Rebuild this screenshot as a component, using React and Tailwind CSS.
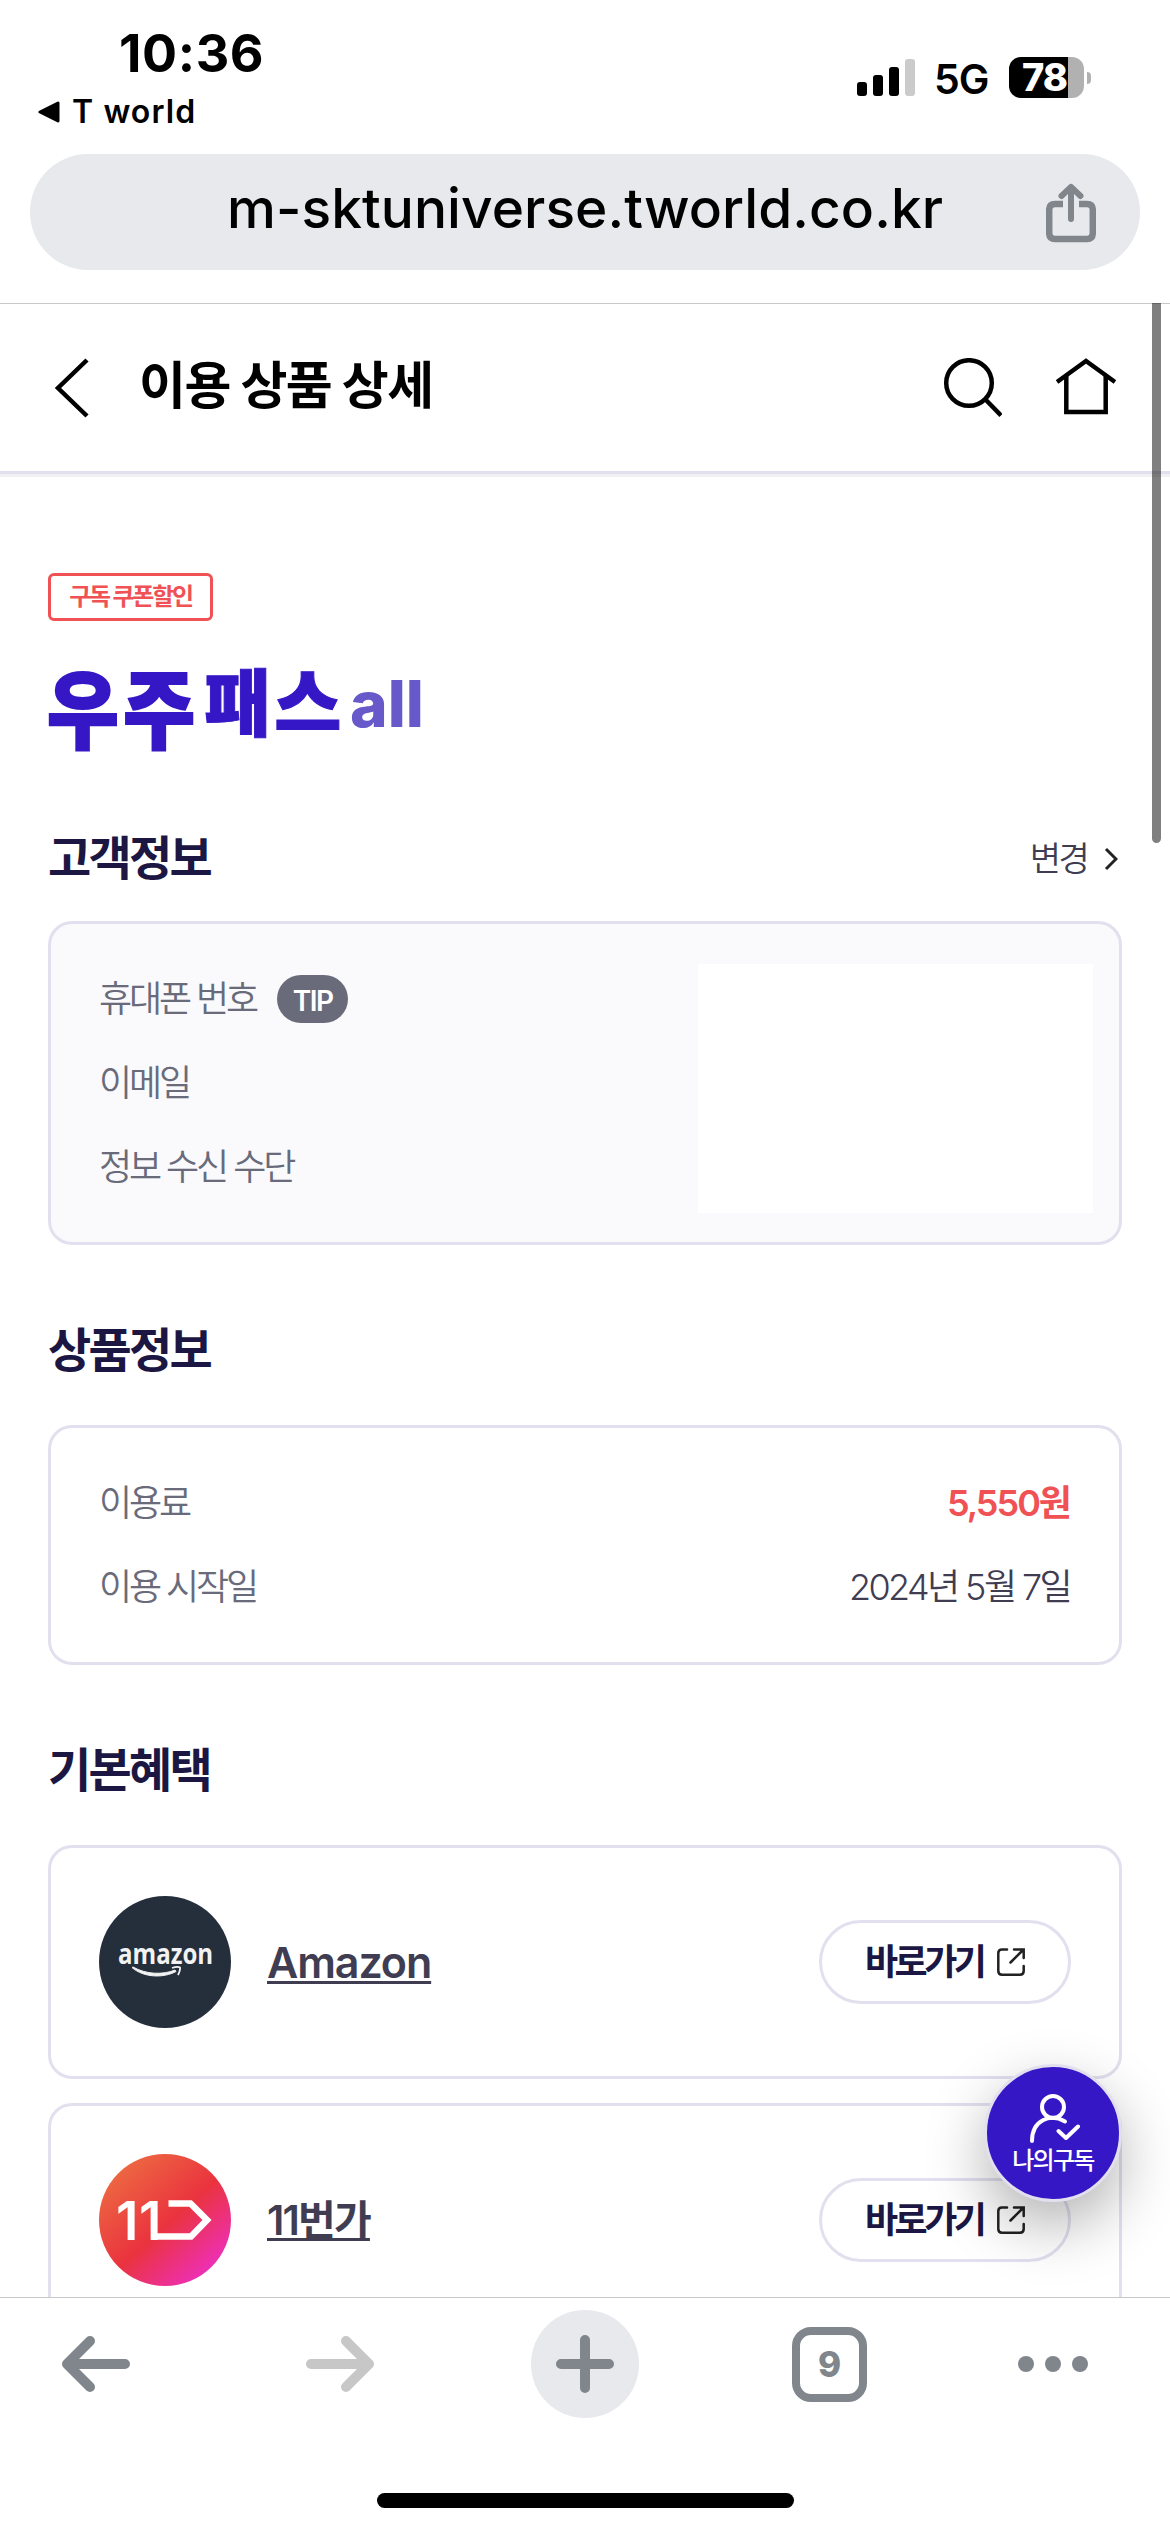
import { clsx } from "clsx";

const benefits = [
    { id: "amazon", name: "Amazon", Logo: AmazonLogo, nameClass: "text-[43px] font-semibold tracking-[-1.100px]" },
    { id: "11st", name: "11번가", Logo: ElevenLogo, nameClass: "text-[41px] font-semibold tracking-[-1.800px]" },
];

function AmazonLogo() {
    return (
        <svg width="132" height="132" viewBox="0 0 132 132" overflow="visible">
            <circle cx="66" cy="66" r="66" fill="#252f3c" />
            <text
                transform="translate(19 68) scale(0.830 1)"
                fill="#f2f2f2"
                fontSize="29"
                fontWeight="700"
                fontFamily="'Open Sans', sans-serif"
            >
                amazon
            </text>
            <path d="M33 71.500 C45 82 65 82 77 75.500 L76 74 C64 79 47 78.500 34 71 Z" fill="#f2f2f2" stroke="#f2f2f2" />
            <path d="M73 72 C77 70.500 80 70.800 81 71.500 C81.500 74 80 77 79 79" fill="none" stroke="#f2f2f2" strokeWidth="1.800" />
        </svg>
    );
}

function ElevenLogo() {
    return (
        <svg width="132" height="132" viewBox="0 0 132 132" overflow="visible">
            <defs>
                <linearGradient id="eleven" x1="0.1" y1="0.12" x2="0.85" y2="0.95">
                    <stop offset="0" stopColor="#ed6a42" />
                    <stop offset="0.52" stopColor="#ea333e" />
                    <stop offset="1" stopColor="#ee2fc4" />
                </linearGradient>
            </defs>
            <circle cx="66" cy="66" r="66" fill="url(#eleven)" />
            <g fill="#fff" fontSize="53" fontWeight="600" fontFamily="Inter, sans-serif">
                <text x="17" y="85.5">1</text>
                <text x="40" y="85.5">1</text>
            </g>
            <path d="M69.5 49.5 H91.500 L108 66 L92 82.500 H54" fill="none" stroke="#fff" strokeWidth="6.500" />
        </svg>
    );
}

function StatusBar() {
    return (
        <div className="flex h-[154px] justify-between pr-[79px] pl-[38px]">
            <div className="flex flex-col">
                <span className="mt-[24px] ml-[81px] text-[52px] leading-[60px] font-bold tracking-[0.600px]">10:36</span>
                <div className="mt-[8px] flex items-center gap-[12px]">
                    <svg width="22" height="22" viewBox="0 0 22 22">
                        <path d="M2 11 L20 2 V20 Z" stroke="#000" strokeWidth="3" strokeLinejoin="round" />
                    </svg>
                    <span className="text-[32px] leading-[40px] font-semibold tracking-[1.100px]">T world</span>
                </div>
            </div>
            <div className="mt-[57px] flex h-[41px] items-center">
                <svg width="58" height="38" viewBox="0 0 58 38">
                    <rect x="0" y="23" width="10" height="14" rx="3" />
                    <rect x="16" y="16" width="10" height="21" rx="3" />
                    <rect x="32" y="8" width="10" height="29" rx="3" />
                    <rect x="48" y="0" width="10" height="37" rx="3" fill="#cbcbcb" />
                </svg>
                <span className="mt-[3px] ml-[19px] w-[75px] text-[41px] leading-[41px] font-semibold tracking-[-1px]">5G</span>
                <div className="flex h-[41px] w-[75px] items-center justify-center rounded-[12px] bg-linear-to-r from-black from-79% to-[#b1b1b1] to-79% text-[38px] leading-[41px] font-extrabold tracking-[-1px] text-white">
                    <span className="-ml-[4px]">78</span>
                </div>
                <div className="ml-[3px] h-[12px] w-[4px] rounded-r-full bg-[#b1b1b1]" />
            </div>
        </div>
    );
}

function AddressBar() {
    return (
        <div className="mx-[30px] flex h-[116px] items-center rounded-full bg-[#e8e9ed] pr-[44px] pl-[197px]">
            <span className="-mt-[8px] flex-1 text-[55px] leading-[60px] font-medium tracking-[0.080px]">
                m-sktuniverse.tworld.co.kr
            </span>
            <svg className="mt-[2px]" width="50" height="60" viewBox="0 0 50 60" fill="none" stroke="#80868b" strokeWidth="6.500">
                <path d="M17 21 H9 Q3.200 21 3.200 27 V50 Q3.200 56 9 56 H41 Q46.800 56 46.800 50 V27 Q46.800 21 41 21 H33" />
                <path d="M25 36 V5 M15.500 13 L25 3.800 L34.500 13" strokeWidth="6" strokeLinecap="round" strokeLinejoin="round" />
            </svg>
        </div>
    );
}

function PageHeader() {
    return (
        <header className="flex h-[171px] shrink-0 items-center border-t border-b-[3px] border-t-[#c8c8ca] border-b-[#e2e0ef] px-[54px] shadow-[0_3px_0_#f1f0f5]">
            <svg width="36" height="60" viewBox="0 0 36 60" fill="none" stroke="#000" strokeWidth="4.500">
                <path d="M33 2 L4 30 L33 58" />
            </svg>
            <h1 className="-mt-[4px] ml-[49px] flex-1 text-[51px] leading-[60px] font-bold tracking-[-1.500px]">이용 상품 상세</h1>
            <svg width="60" height="60" viewBox="0 0 60 60" fill="none" stroke="#000" strokeWidth="4.500">
                <circle cx="27" cy="25" r="22.800" />
                <path d="M43 41 L59 57.500" />
            </svg>
            <svg className="ml-[54px]" width="60" height="60" viewBox="0 0 60 60" fill="none" stroke="#000" strokeWidth="4.500">
                <path d="M1 24 L30 3 L59 24" />
                <path d="M10.300 18 V54 H49.700 V18" />
            </svg>
        </header>
    );
}

function SectionTitle({ children }) {
    return <h2 className="text-[47px] leading-[60px] font-bold tracking-[-2.700px] text-[#1b1742]">{children}</h2>;
}

function InfoRow({ label, value, valueClass, tip }) {
    return (
        <div className="flex h-[48px] items-center">
            <span className="text-[36px] leading-[48px] font-[350] tracking-[-3.100px] text-[#696b7b]">{label}</span>
            {tip && (
                <span className="ml-[21px] flex h-[48px] w-[71px] items-center justify-center rounded-full bg-[#696b7b] pt-[4px] text-[28px] font-semibold tracking-[-1.500px] text-white">
                    {tip}
                </span>
            )}
            {value && <span className={clsx("mr-[1px] ml-auto text-[36px] leading-[48px]", valueClass)}>{value}</span>}
        </div>
    );
}

function BenefitCard({ name, Logo, nameClass }) {
    return (
        <div className="flex h-[234px] items-center rounded-[24px] border-[3px] border-[#e2e0ef] px-[48px]">
            <Logo />
            <a
                className={clsx(
                    "ml-[36px] leading-[60px] text-[#403d52] underline decoration-[3px] underline-offset-[3px] [text-decoration-skip-ink:none]",
                    nameClass
                )}
            >
                {name}
            </a>
            <button className="ml-auto flex h-[84px] w-[252px] items-center rounded-full border-[3px] border-[#e2e0ef] pl-[43px]">
                <span className="w-[132px] text-left text-[36px] leading-[48px] font-bold tracking-[-3.500px] text-[#1b1742]">
                    바로가기
                </span>
                <svg width="28" height="28" viewBox="0 0 28 28" fill="none" stroke="#222" strokeWidth="2.500" strokeLinecap="round">
                    <path d="M10 1.500 H5 Q1.300 1.500 1.300 5 V23 Q1.300 26.700 5 26.700 H23 Q26.700 26.700 26.700 23 V18" />
                    <path d="M17 1.500 H26.700 V10 M26 2 L13.500 14.500" />
                </svg>
            </button>
        </div>
    );
}

function FloatingButton() {
    return (
        <button className="absolute top-[1761px] right-[48px] flex h-[138px] w-[138px] flex-col items-center rounded-full border-[3px] border-[#e2e0ef] bg-[#3617c6] shadow-[0_24px_60px_rgba(0,0,0,0.3)]">
            <svg className="mt-[25px]" width="54" height="54" viewBox="0 0 54 54" fill="none" stroke="#fff" strokeWidth="4" strokeLinecap="round">
                <circle cx="27" cy="15" r="11" />
                <path d="M6 49 C6 28 24 21 39 29.500" />
                <path d="M32.500 39 L40 46 L52 34.500" strokeLinejoin="round" />
            </svg>
            <span className="mt-[2px] text-[24px] leading-[26px] font-medium tracking-[-1.700px] whitespace-nowrap text-white">나의구독</span>
        </button>
    );
}

function Toolbar() {
    return (
        <nav className="relative flex h-[235px] flex-col items-center border-t border-[#c8c8ca] bg-white">
            <div className="flex h-[132px] w-full items-center pr-[82px] pl-[60px]">
                <svg width="70" height="60" viewBox="0 0 70 60" fill="none" stroke="#80868b" strokeWidth="10" strokeLinecap="round" strokeLinejoin="round">
                    <path d="M65 30 H8 M30 7 L7 30 L30 53" />
                </svg>
                <svg className="ml-[176px]" width="70" height="60" viewBox="0 0 70 60" fill="none" stroke="#c7c7c7" strokeWidth="10" strokeLinecap="round" strokeLinejoin="round">
                    <path d="M5 30 H62 M40 7 L63 30 L40 53" />
                </svg>
                <div className="ml-[155px] flex h-[108px] w-[108px] items-center justify-center rounded-full bg-[#e8e9ed]">
                    <svg width="60" height="60" viewBox="0 0 60 60" stroke="#80868b" strokeWidth="10" strokeLinecap="round">
                        <path d="M6 30 H54 M30 6 V54" />
                    </svg>
                </div>
                <div className="ml-[153px] flex h-[75px] w-[75px] items-center justify-center rounded-[19px] border-[8px] border-[#80868b] text-[35px] leading-[40px] font-extrabold text-[#80868b]">
                    9
                </div>
                <div className="ml-auto flex gap-[11px]">
                    <i className="h-4 w-4 rounded-full bg-[#80868b]" />
                    <i className="h-4 w-4 rounded-full bg-[#80868b]" />
                    <i className="h-4 w-4 rounded-full bg-[#80868b]" />
                </div>
            </div>
            <div className="mt-[63px] h-[15px] w-[417px] rounded-full bg-black" />
        </nav>
    );
}

export default function App() {
    return (
        <div className="flex h-[2532px] w-[1170px] flex-col overflow-hidden bg-white font-['Inter','Noto_Sans_CJK_KR',sans-serif] text-black">
            <StatusBar />
            <AddressBar />

            <div className="relative mt-[33px] flex h-[1994px] shrink-0 flex-col overflow-hidden">
                <PageHeader />

                <main className="flex flex-col px-[48px]">
                    <span className="mt-[99px] flex h-[48px] w-[165px] items-center justify-center rounded-[6px] border-[3px] border-[#ef5155] text-[24px] font-semibold tracking-[-2.300px] whitespace-nowrap text-[#ef5155]">
                        구독 쿠폰할인
                    </span>

                    {/* product logo */}
                    <div className="mt-[41px] flex h-[96px] items-center font-black text-[#3617c6]">
                        <span className="mt-[2px] -ml-px w-[157px] scale-y-110 text-[78px] leading-[96px] tracking-[4.500px] whitespace-nowrap [-webkit-text-stroke:2px_#3617c6]">
                            우주
                        </span>
                        <span className="-mt-[12px] w-[146px] text-[73px] leading-[76px] tracking-[3px] whitespace-nowrap [-webkit-text-stroke:1px_#3617c6]">
                            패스
                        </span>
                        <span className="-mt-[12px] text-[64px] leading-[76px] font-extrabold text-[#6759c9]">all</span>
                    </div>

                    <div className="mt-[70px] flex items-center justify-between">
                        <SectionTitle>고객정보</SectionTitle>
                        <a className="flex items-center pt-[2px] text-[34px] leading-[48px] font-[350] tracking-[-2.700px] text-[#403d52]">
                            변경
                            <svg className="mr-[4px] ml-[17px]" width="14" height="24" viewBox="0 0 14 24" fill="none" stroke="#222" strokeWidth="3">
                                <path d="M2 2 L12 12 L2 22" />
                            </svg>
                        </a>
                    </div>

                    <div className="mt-[33px] flex h-[324px] justify-between rounded-[24px] border-[3px] border-[#e2e0ef] bg-[#fafafc] pr-[26px] pl-[48px]">
                        <div className="flex flex-col gap-[36px] pt-[51px]">
                            <InfoRow label="휴대폰 번호" tip="TIP" />
                            <InfoRow label="이메일" />
                            <InfoRow label="정보 수신 수단" />
                        </div>
                        <div className="mt-[40px] h-[249px] w-[395px] bg-white" />
                    </div>

                    <div className="mt-[75px]">
                        <SectionTitle>상품정보</SectionTitle>
                    </div>
                    <div className="mt-[45px] flex h-[240px] flex-col gap-[36px] rounded-[24px] border-[3px] border-[#e2e0ef] px-[48px] pt-[51px]">
                        <InfoRow label="이용료" value="5,550원" valueClass="font-semibold tracking-[-2px] text-[#ef5155]" />
                        <InfoRow label="이용 시작일" value="2024년 5월 7일" valueClass="font-[350] tracking-[-2.600px] text-[#403d52]" />
                    </div>

                    <div className="mt-[75px]">
                        <SectionTitle>기본혜택</SectionTitle>
                    </div>
                    <div className="mt-[45px] flex flex-col gap-[24px]">
                        {benefits.map((item) => (
                            <BenefitCard key={item.id} {...item} />
                        ))}
                    </div>
                </main>

                <FloatingButton />

                {/* scroll indicator */}
                <div className="absolute top-0 right-[9px] h-[540px] w-[9px] rounded-b-full bg-black/50" />
            </div>

            <Toolbar />
        </div>
    );
}
